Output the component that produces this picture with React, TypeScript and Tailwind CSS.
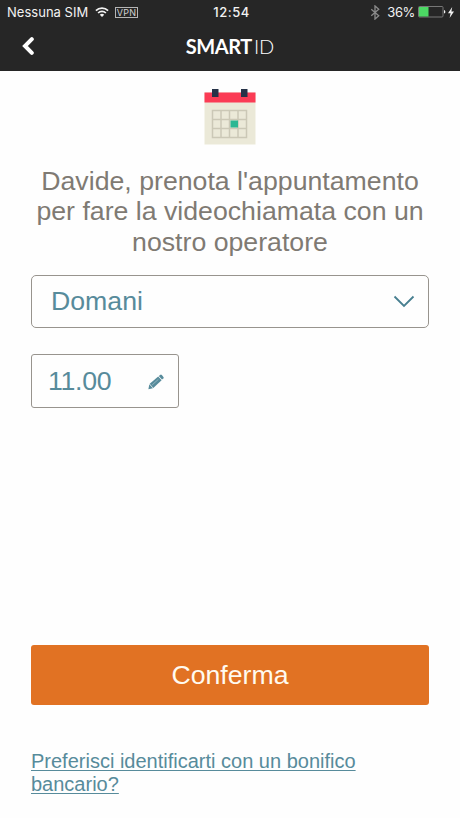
import { JSX } from "react";

const StatusBar = (): JSX.Element => {
  return (
    <div className="grid h-6 grid-cols-3 items-center font-['Inter','Roboto',sans-serif] text-[13px] leading-none text-[#f2f2f2]">
      <div className="flex items-center pl-[7px] whitespace-nowrap">
        <span className="w-[82px] tracking-[0.02px]">Nessuna SIM</span>
        <svg viewBox="0 0 14 10" className="ml-[6px] h-[10px] w-[14px] shrink-0" fill="none">
          <path d="M.9 3.6a8.6 8.6 0 0 1 12.2 0" stroke="currentColor" strokeWidth="1.7" />
          <path d="M3.1 6a5.5 5.5 0 0 1 7.8 0" stroke="currentColor" strokeWidth="1.7" />
          <path d="M7 10 4.8 7.8a3.2 3.2 0 0 1 4.4 0z" fill="currentColor" />
        </svg>
        <span className="ml-[6px] flex h-[11px] w-[23px] shrink-0 items-center justify-center border border-[#b5b5b5] text-[9px] tracking-[0.2px] text-[#d0d0d0]">
          VPN
        </span>
      </div>
      <span className="pl-[3px] text-center font-medium tracking-[0.5px]">12:54</span>
      <div className="flex items-center justify-end pr-[6px]">
        <svg viewBox="0 0 10 16" className="mr-[7px] h-[15px] w-[10px]" fill="none">
          <path d="m1 4.5 8 7L5 15V1l4 3.5-8 7" stroke="#8a8a8a" strokeWidth="1.4" />
        </svg>
        <span className="mr-[3px] tracking-[-0.4px]">36%</span>
        <svg viewBox="0 0 28 12" className="h-3 w-7" fill="none">
          <rect x=".5" y=".5" width="24.5" height="10.5" rx="1" stroke="#777" />
          <rect x="1" y="1" width="9.5" height="9.5" fill="#4cd964" />
          <path d="M26 4c1.8.3 1.8 3.3 0 3.6z" fill="currentColor" />
        </svg>
        <svg viewBox="0 0 6 11" className="ml-[2px] h-[11px] w-[6px]">
          <path d="M4.2 0 0 6.2h2.6L1.6 11 6 4.4H3.4z" fill="currentColor" />
        </svg>
      </div>
    </div>
  );
};

const Header = (): JSX.Element => {
  return (
    <header className="h-[71px] bg-[#262626]">
      <StatusBar />
      <div className="grid h-[45px] grid-cols-[60px_1fr_60px] items-center text-white">
        <button type="button" aria-label="Indietro" className="pb-px pl-[22px]">
          <svg viewBox="0 0 12 18" className="h-[18px] w-3" fill="none">
            <path d="M9.8 2.2 3 9l6.8 6.8" stroke="currentColor" strokeWidth="4" strokeLinecap="round" />
          </svg>
        </button>
        <h1 className="flex items-baseline justify-center pb-px font-['Lato',sans-serif] text-[20px] leading-none">
          <span className="font-bold tracking-[-0.4px]">SMART</span>
          <span className="ml-[2px] font-light">ID</span>
        </h1>
      </div>
    </header>
  );
};

const CalendarIcon = (): JSX.Element => {
  return (
    <svg viewBox="0 0 52 56" className="h-14 w-[52px]">
      <rect x=".5" y="3.5" width="51" height="52" fill="#ebe9d8" />
      <rect x=".5" y="3.5" width="51" height="10" fill="#fb3b55" />
      <rect x="8" width="6.5" height="8" fill="#263248" />
      <rect x="37" width="6.5" height="8" fill="#263248" />
      <path
        d="M8.5 21.5h34v27h-34zM17 21.5v27M25.5 21.5v27M34 21.5v27M8.5 30.5h34M8.5 39.5h34"
        fill="none"
        stroke="#cbc8b6"
        strokeWidth="1.5"
      />
      <rect x="26.5" y="31.5" width="7.5" height="7" fill="#2bb793" />
    </svg>
  );
};

const PencilIcon = (): JSX.Element => {
  return (
    <svg viewBox="0 0 16 16" className="h-4 w-4" fill="currentColor">
      <path d="m10.8 2 1.3-1.1q.9-.7 1.7.1l1.6 1.9q.7.9-.1 1.6L14 5.6z" />
      <path d="m10.2 2.5 3.4 3.8L5.3 13.9 1.7 9.8z" />
      <path d="m1.3 10.2 3.6 4.1-4.5.9z" />
      <path d="m4.2 10.9 6.2-5.6" stroke="#fff" strokeWidth=".35" />
    </svg>
  );
};

export default function App(): JSX.Element {
  return (
    <div className="flex h-[818px] w-[460px] flex-col bg-[#fefefe] font-['Liberation_Sans',Arial,sans-serif]">
      <Header />
      <main className="flex flex-1 flex-col px-[31px]">
        <div className="flex justify-center pt-[18px]">
          <CalendarIcon />
        </div>
        <p className="mt-[21px] text-center text-[26.7px] leading-[30.4px] whitespace-nowrap text-[#7f7a73]">
          Davide, prenota l'appuntamento
          <br />
          per fare la videochiamata con un
          <br />
          nostro operatore
        </p>

        <button
          type="button"
          className="mt-[17.8px] flex h-[53px] w-[398px] items-center justify-between rounded-[5px] border border-[#98948e] pr-[13px] pl-[19px] text-[26.7px] text-[#578b9b]"
        >
          Domani
          <svg viewBox="0 0 22 13" className="h-[13px] w-[22px]" fill="none">
            <path d="m1.5 1.5 9.5 9.5 9.5-9.5" stroke="#477f90" strokeWidth="1.8" />
          </svg>
        </button>

        <button
          type="button"
          className="mt-[26px] flex h-[54px] w-[148px] items-center justify-between rounded-[3px] border border-[#98948e] pt-px pr-[14px] pl-4 text-[26.7px] tracking-[-0.3px] text-[#578b9b]"
        >
          11.00
          <PencilIcon />
        </button>

        <button
          type="button"
          className="mt-[237px] h-[60px] w-[398px] rounded-[3px] bg-[#e17223] pt-px text-[26.7px] text-[#fffaf0]"
        >
          Conferma
        </button>

        <a
          href="#"
          className="mt-[45px] text-[20px] leading-[23px] text-[#578b9b] underline decoration-1 underline-offset-2"
        >
          Preferisci identificarti con un bonifico
          <br />
          bancario?
        </a>
      </main>
    </div>
  );
}
